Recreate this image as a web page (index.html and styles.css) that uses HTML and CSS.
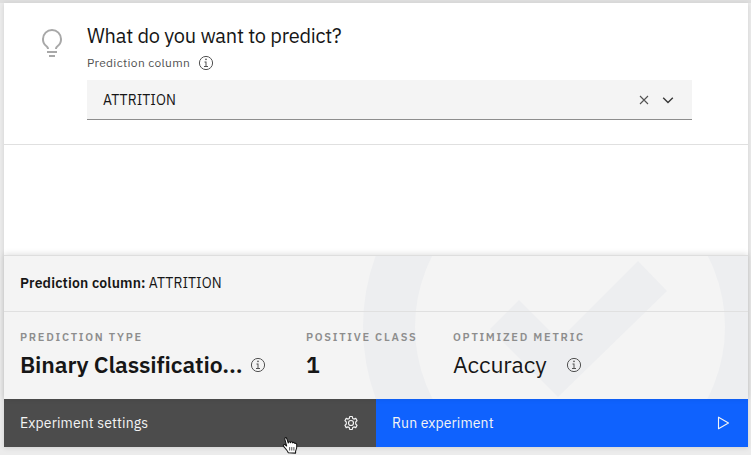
FILE: index.html
```
<!DOCTYPE html>
<html lang="en">
<head>
<meta charset="utf-8">
<title>Experiment</title>
<link rel="stylesheet" href="styles.css">
</head>
<body>
<svg width="0" height="0" class="defs">
  <symbol id="info" viewBox="0 0 16 16">
    <circle cx="8" cy="8" r="6.6" fill="none" stroke="currentColor"/>
    <path fill="currentColor" d="M8.5 11V6.500h-2v1h1V11H6v1h4v-1zM8 3.500a.85.85 0 1 0 0 1.700.85.85 0 0 0 0-1.700z"/>
  </symbol>
</svg>
<main class="panel">
  <section class="question">
    <svg class="bulb" viewBox="0 0 32 32" fill="currentColor"><path d="M11 24h10v2H11zm2 4h6v2h-6zM16 2A10 10 0 0 0 6 12a9.19 9.19 0 0 0 3.46 7.62c1 .93 1.54 1.46 1.54 2.38h2c0-1.84-1.11-2.87-2.19-3.86A7.2 7.2 0 0 1 8 12a8 8 0 0 1 16 0 7.2 7.2 0 0 1-2.82 6.14c-1.07 1-2.18 2-2.18 3.86h2c0-.92.53-1.45 1.54-2.39A9.18 9.18 0 0 0 26 12 10 10 0 0 0 16 2z"/></svg>
    <div class="field">
      <h1><span class="t-title">What do you want to predict?</span></h1>
      <div class="label"><span class="t-label">Prediction column</span><svg class="info"><use href="#info"/></svg></div>
      <div class="select">
        <span class="t-value">ATTRITION</span>
        <svg class="clear" viewBox="0 0 16 16"><path d="M4 4l8 8M12 4l-8 8"/></svg>
        <svg class="chevron" viewBox="0 0 16 16"><path d="M3.2 5.7L8 10.4l4.800-4.700"/></svg>
      </div>
    </div>
  </section>
  <section class="summary">
    <svg class="watermark" viewBox="0 1 744 143">
      <circle cx="566" cy="72" r="181" fill="none" stroke="currentColor" stroke-width="52"/>
      <path fill="currentColor" d="M486 74l29-29 40 40 79-79 29 30-109 106z"/>
    </svg>
    <div class="column-row"><strong class="t-strong">Prediction column:</strong><span class="t-col">ATTRITION</span></div>
    <div class="metrics">
      <div class="metric type"><h2>PREDICTION TYPE</h2><div class="result"><b class="t-binary">Binary Classificatio...</b><svg class="info"><use href="#info"/></svg></div></div>
      <div class="metric positive"><h2>POSITIVE CLASS</h2><div class="result"><b>1</b></div></div>
      <div class="metric"><h2>OPTIMIZED METRIC</h2><div class="result accuracy"><span class="t-acc">Accuracy</span><svg class="info"><use href="#info"/></svg></div></div>
    </div>
  </section>
  <footer class="actions">
    <button class="settings"><span class="t-settings">Experiment settings</span>
      <svg viewBox="0 0 16 16" fill="none" stroke="currentColor" stroke-width="1.150" stroke-linejoin="round"><circle cx="8" cy="8" r="2.500"/><path d="M6.700 1.500h2.600l.4 1.900 1.200.7 1.900-.7 1.300 2.300-1.400 1.300v2l1.400 1.300-1.300 2.300-1.900-.7-1.200.7-.4 1.900H6.700l-.4-1.900-1.200-.7-1.900.7-1.300-2.300L3.300 9V7L1.900 5.700l1.300-2.300 1.900.7 1.200-.7z"/></svg>
    </button>
    <button class="run"><span class="t-run">Run experiment</span>
      <svg viewBox="0 0 16 16" fill="none" stroke="currentColor" stroke-width="1.100" stroke-linejoin="round"><path d="M3.500 2.200v11.600L13.500 8z"/></svg>
    </button>
  </footer>
</main>
<svg class="cursor" viewBox="0 0 16 18"><path fill="#fff" stroke="#111" stroke-linejoin="round" d="M5.800 15.800c-.3-1.300-1-2-2-3.200-.8-1-1.700-1.900-2.400-3-.6-1 .3-1.900 1.300-1.400l1.700 1.300L2.600 3C2.200 1.500 3.800 1 4.400 2.300l1.500 4.300c-.1-1.500 1.700-1.700 2-.2.300-1.200 1.900-1.200 2.200.2.500-.9 1.800-.6 2 .5.800-.6 1.700.100 1.800 1.100.3 2.700-.1 4.600-1.100 6.200v1.800z"/><path fill="none" stroke="#111" stroke-width=".7" d="M7.200 10.500v3.300M9.200 10.500v3.300M11.200 10.500v3.300"/></svg>
</body>
</html>
```
FILE: styles.css
```
* { box-sizing: border-box; }
body {
  margin: 0;
  width: 751px;
  height: 455px;
  overflow: hidden;
  padding: 3px 3px 0 4px;
  background: #ececec;
  box-shadow: inset 0 3px #dfdfdf;
  color: #161616;
  font-family: "IBM Plex Sans", Roboto, "Noto Sans", sans-serif;
}
.defs { position: absolute; }
svg { display: block; flex: none; }
h1, h2 { margin: 0; font-weight: 400; }
span, b, strong, h2 { white-space: nowrap; }
.panel {
  height: 444px;
  display: flex;
  flex-direction: column;
  background: #fff;
  box-shadow: 0 1px 5px rgba(0, 0, 0, .12);
}
.question {
  height: 142px;
  padding: 21px 56px 0 32px;
  display: flex;
  border-bottom: 1px solid #e0e0e0;
}
.bulb { width: 32px; height: 32px; margin: 3px 19px 0 0; color: #a8a8a8; }
.field { flex: 1; }
h1 { font-size: 20px; line-height: 24px; }
.label { display: flex; align-items: center; height: 16px; margin-top: 7px; font-size: 12px; color: #525252; }
.label span { line-height: 15px; margin-bottom: 1px; }
.info { width: 16px; height: 16px; color: #525252; }
.label .info { margin-left: 8px; }
.select {
  height: 40px;
  margin-top: 9px;
  padding: 0 16px;
  display: flex;
  align-items: center;
  background: #f4f4f4;
  border-bottom: 1px solid #8d8d8d;
  font-size: 14px;
}
.select svg { width: 16px; height: 16px; fill: none; stroke: #393939; stroke-width: 1.1; }
.select .clear { margin-left: auto; stroke: #525252; }
.select .chevron { margin-left: 8px; stroke-width: 1.4; }
.summary {
  position: relative;
  height: 144px;
  margin-top: auto;
  background: #f4f4f4;
  border-top: 1px solid #dedede;
  box-shadow: 0 -1px 6px rgba(0, 0, 0, .13);
}
.watermark { position: absolute; left: 0; top: 0; width: 744px; height: 143px; color: #edeef0; }
.column-row {
  position: relative;
  height: 56px;
  padding: 0 0 2px 16px;
  display: flex;
  align-items: center;
  gap: 3px;
  font-size: 14px;
  border-bottom: 1px solid #e0e0e0;
}
strong, b { font-weight: 600; }
.metrics {
  position: relative;
  display: grid;
  grid-template-columns: 286px 147px 1fr;
  padding: 17px 0 0 16px;
}
h2 { font-size: 11px; line-height: 16px; font-weight: 600; color: #8d8d8d; letter-spacing: 1.75px; }
.result { display: flex; align-items: center; height: 28px; margin-top: 6px; font-size: 23px; }
.result b, .result span { margin-bottom: 2px; }
.type .info { margin-left: 8px; }
.accuracy .info { margin-left: 19px; }
.actions { display: grid; grid-template-columns: 1fr 1fr; height: 48px; }
button {
  display: flex;
  align-items: center;
  justify-content: space-between;
  padding: 0 17px 0 16px;
  border: 0;
  font: 14px "IBM Plex Sans", Roboto, "Noto Sans", sans-serif;
  color: #f4f4f4;
  background: #4c4c4c;
}
button svg { width: 16px; height: 16px; }
.run { background: #0f62fe; }
.cursor { position: absolute; left: 282px; top: 436px; width: 17px; height: 19px; }
.t-title { letter-spacing: -.24px; }
.t-label { letter-spacing: .32px; }
.t-value, .t-col { letter-spacing: .1px; }
.t-strong { letter-spacing: .18px; }
.t-binary { letter-spacing: -.13px; }
.t-acc { letter-spacing: -.12px; }
.t-settings { letter-spacing: .14px; }
.t-run { letter-spacing: .12px; }
```
